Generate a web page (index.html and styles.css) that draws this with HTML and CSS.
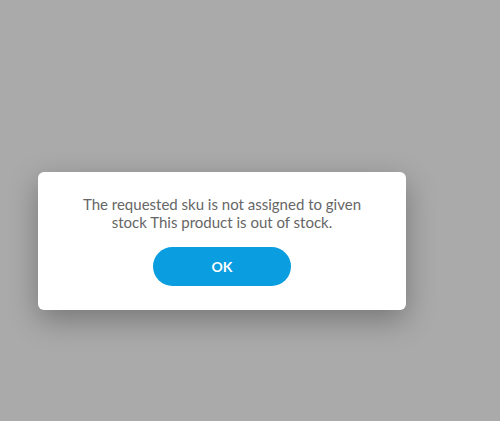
FILE: index.html
```html
<!DOCTYPE html>
<html lang="en">
  <head>
    <meta charset="UTF-8" />
    <meta name="viewport" content="width=device-width, initial-scale=1.0" />
    <title>Out of stock</title>
    <link rel="stylesheet" href="styles.css">
  </head>
  <body>
    <div class="dialog">
      <p class="dialog-msg">The requested sku is not assigned to given stock This product is out of stock.</p>
      <button class="btn">OK</button>
    </div>
  </body>
</html>
```

FILE: styles.css
```css
* {
  margin: 0;
  padding: 0;
  box-sizing: border-box;
}

body {
  background-color: #aaaaaa;
  font-family: 'Lato', sans-serif;
  min-height: 100vh;
  padding: 172px 0 0 38px;
}

.dialog {
  width: 368px;
  height: 138px;
  background-color: #ffffff;
  border-radius: 6px;
  box-shadow: 0 10px 30px rgba(0, 0, 0, 0.3);
  padding: 23px 30px 0;
  display: flex;
  flex-direction: column;
  align-items: center;
}

.dialog-msg {
  color: #666666;
  font-size: 15px;
  line-height: 18px;
  text-align: center;
}

.btn {
  margin-top: 16px;
  width: 138px;
  height: 39px;
  border: none;
  border-radius: 20px;
  background-color: #0a9de0;
  color: #ffffff;
  font-family: 'Lato', sans-serif;
  font-weight: bold;
  font-size: 14px;
  cursor: pointer;
}
```
